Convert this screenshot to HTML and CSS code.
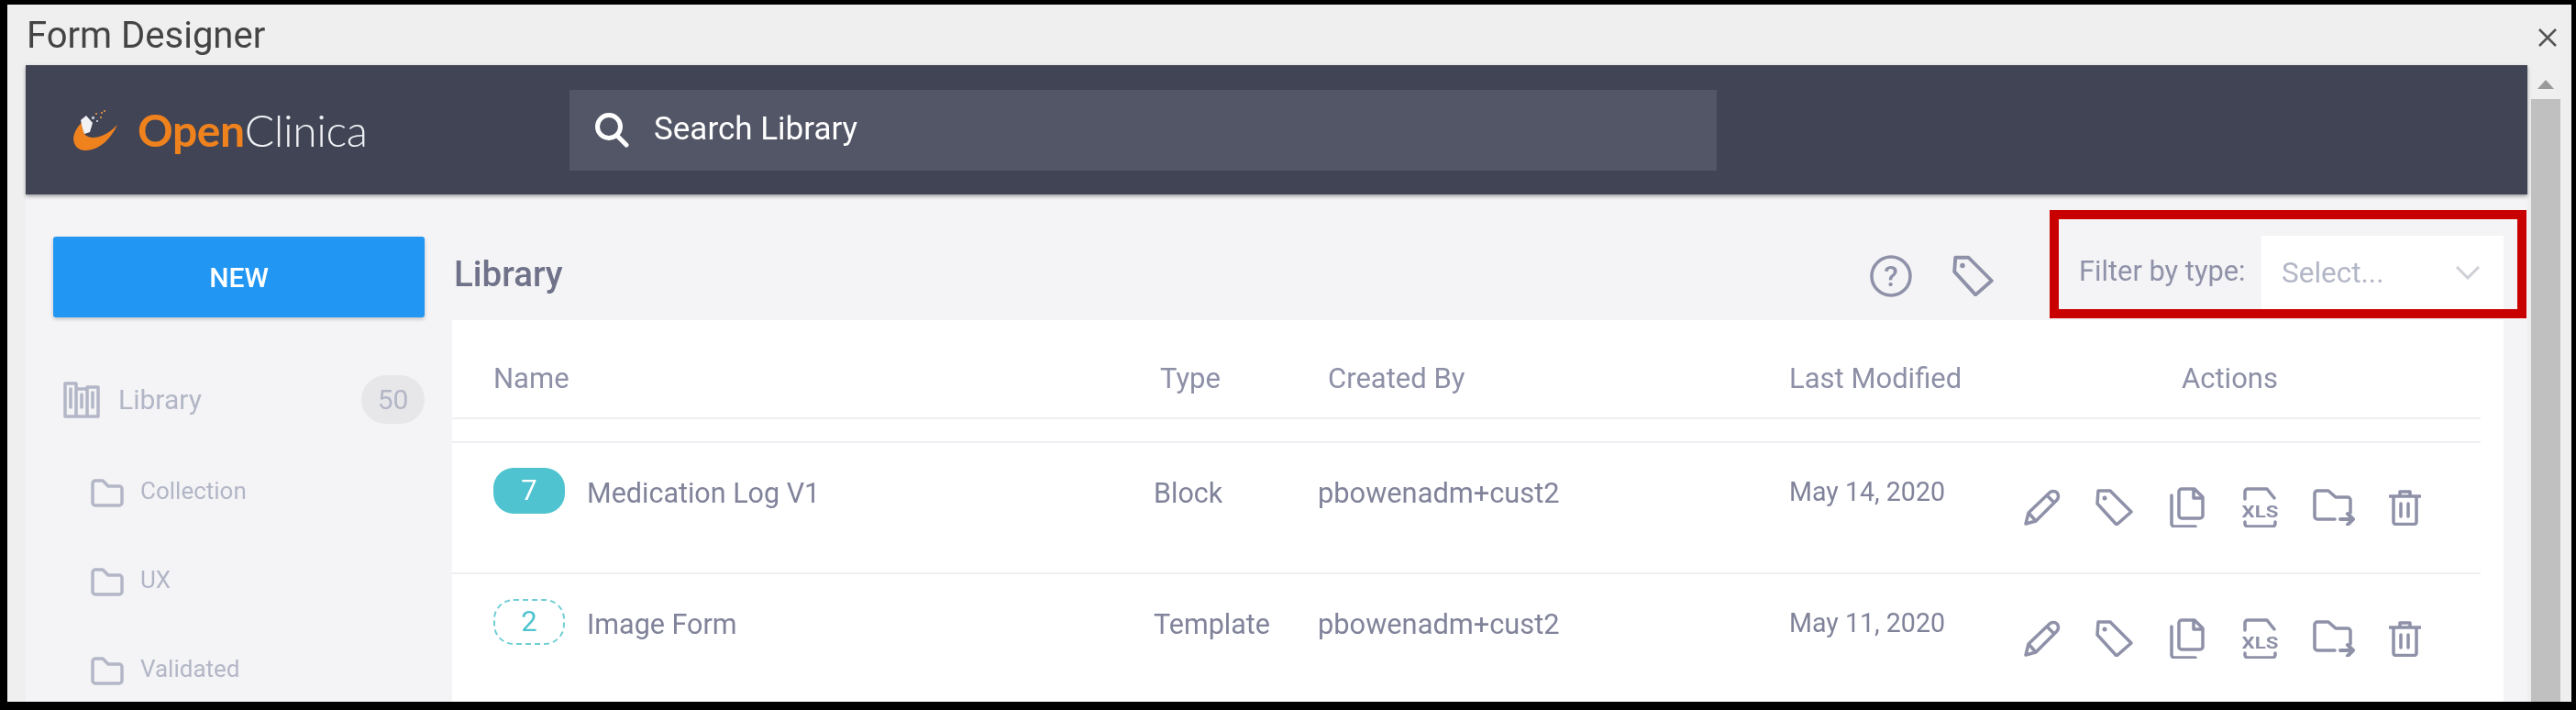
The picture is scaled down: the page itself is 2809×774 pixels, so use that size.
FILE: index.html
```html
<!DOCTYPE html>
<html lang="en">
<head>
    <meta charset="UTF-8">
    <title>Form Designer</title>
    <link rel="stylesheet" href="styles.css">
</head>
<body>
    <svg class="defs" width="0" height="0">
        <symbol id="i-pencil" viewBox="0 0 40 40"><path d="M2 38l3-12L28 4c2-2 6-2 8 0s2 6 0 8L13 35z M25 7l8 8 M5 26l8 9"/></symbol>
        <symbol id="i-tag" viewBox="0 0 41 40"><path d="M3 2h13l23 23-16 14L2 16z"/><circle class="dot" cx="10" cy="10" r="2.5"/></symbol>
        <symbol id="i-copy" viewBox="0 0 38 44"><path d="M13 2h14l9 9v20a3 3 0 0 1-3 3H13a3 3 0 0 1-3-3V5a3 3 0 0 1 3-3z M26 2v10h10 M2 9v31a3 3 0 0 0 3 3h23"/></symbol>
        <symbol id="i-move" viewBox="0 0 47 40"><path d="M24 33H5a3 3 0 0 1-3-3V5a3 3 0 0 1 3-3h12l8 7h13a3 3 0 0 1 3 3v14"/><path class="thick" d="M30 33h14 M38 27l6 6-6 6"/></symbol>
        <symbol id="i-trash" viewBox="0 0 35 39"><path d="M1 7h33 M12 6V2h11v4 M5 8v27a2.5 2.5 0 0 0 2.500 2.500h20a2.500 2.500 0 0 0 2.500-2.500V8 M13 15v14 M21 15v14"/></symbol>
        <symbol id="i-folder" viewBox="0 0 36 31"><path d="M2 5a3 3 0 0 1 3-3h8l6 6h12a3 3 0 0 1 3 3v15a3 3 0 0 1-3 3H5a3 3 0 0 1-3-3z"/></symbol>
    </svg>

    <div class="window">
        <div class="titleBar">
            <span class="titleText">Form Designer</span>
            <svg class="closeIcon" viewBox="0 0 22 22"><path d="M2 2l18 18 M20 2L2 20"/></svg>
        </div>

        <div class="windowBody">
            <div class="app">
                <header class="appHeader">
                    <div class="logo">
                        <svg class="logoMark" viewBox="0 0 48 45">
                            <path fill="#f0821e" d="M48 17C42 30 30 45 13 45 3 45-2 36 1 27c2-6 6-11 11-15-1 5-2 11 0 15 4 6 20 7 36-10z"/>
                            <path fill="#f2f2f4" d="M8 12l6-5 7 8-3 10-6 2c-2-5-3-10-4-15z"/>
                            <path fill="#b9bcc9" d="M20 8h3v3h-3z M25 12h2v2h-2z"/>
                            <path fill="#c98a4a" d="M24 4h2v2h-2z M30 3h2v2h-2z M33 1h2v2h-2z M29 8h2v2h-2z"/>
                        </svg>
                        <span class="logoText"><b>Open</b>Clinica</span>
                    </div>
                    <div class="searchBox">
                        <svg class="searchIcon" viewBox="0 0 38 39"><circle cx="16" cy="16" r="12.500"/><path d="M25 26l10 10"/></svg>
                        <span>Search Library</span>
                    </div>
                </header>

                <div class="appBody">
                    <aside class="sidebar">
                        <button class="newBtn">NEW</button>
                        <div class="libraryItem">
                            <svg class="libraryIcon" viewBox="0 0 40 41"><path d="M2 3h12v36H2z M14 9h12v30H14z M26 7h12v32H26z M8 9v20 M20 15v14 M32 13v16"/></svg>
                            <span class="libraryName">Library</span>
                            <span class="countBadge">50</span>
                        </div>
                        <div class="folderItem"><svg class="folderIcon"><use href="#i-folder"/></svg><span>Collection</span></div>
                        <div class="folderItem"><svg class="folderIcon"><use href="#i-folder"/></svg><span>UX</span></div>
                        <div class="folderItem"><svg class="folderIcon"><use href="#i-folder"/></svg><span>Validated</span></div>
                    </aside>

                    <main class="main">
                        <div class="toolbar">
                            <h2 class="pageTitle">Library</h2>
                            <svg class="toolIcon helpIcon" viewBox="0 0 46 46"><circle cx="23" cy="23" r="21"/><text x="23" y="34" text-anchor="middle">?</text></svg>
                            <svg class="toolIcon tagTool"><use href="#i-tag"/></svg>
                            <div class="filterBox">
                                <span class="filterLabel">Filter by type:</span>
                                <div class="selectBox">
                                    <span>Select...</span>
                                    <svg class="chevron" viewBox="0 0 26 15"><path d="M1 1l12 12L25 1"/></svg>
                                </div>
                            </div>
                        </div>

                        <div class="panel">
                            <div class="gridRow headRow">
                                <span>Name</span>
                                <span class="headType">Type</span>
                                <span class="headCreated">Created By</span>
                                <span>Last Modified</span>
                                <span class="headActions">Actions</span>
                            </div>
                            <div class="gridRow dataRow">
                                <div class="nameCell"><span class="numBadge">7</span>Medication Log V1</div>
                                <span>Block</span>
                                <span class="userCell">pbowenadm+cust2</span>
                                <span class="dateCell">May 14, 2020</span>
                                <div class="actions">
                                    <svg class="aPencil"><use href="#i-pencil"/></svg>
                                    <svg class="aTag"><use href="#i-tag"/></svg>
                                    <svg class="aCopy"><use href="#i-copy"/></svg>
                                    <svg class="aXls" viewBox="0 0 41 44">
                                        <path d="M4 13V5a3 3 0 0 1 3-3h21l8 10 M4 38v2a3 3 0 0 0 3 3h27a3 3 0 0 0 3-3v-2"/>
                                        <text x="20.500" y="33" text-anchor="middle" textLength="40" lengthAdjust="spacingAndGlyphs">XLS</text>
                                    </svg>
                                    <svg class="aMove"><use href="#i-move"/></svg>
                                    <svg class="aTrash"><use href="#i-trash"/></svg>
                                </div>
                            </div>
                            <div class="gridRow dataRow">
                                <div class="nameCell"><span class="numBadge dashed">2</span>Image Form</div>
                                <span>Template</span>
                                <span class="userCell">pbowenadm+cust2</span>
                                <span class="dateCell">May 11, 2020</span>
                                <div class="actions">
                                    <svg class="aPencil"><use href="#i-pencil"/></svg>
                                    <svg class="aTag"><use href="#i-tag"/></svg>
                                    <svg class="aCopy"><use href="#i-copy"/></svg>
                                    <svg class="aXls" viewBox="0 0 41 44">
                                        <path d="M4 13V5a3 3 0 0 1 3-3h21l8 10 M4 38v2a3 3 0 0 0 3 3h27a3 3 0 0 0 3-3v-2"/>
                                        <text x="20.500" y="33" text-anchor="middle" textLength="40" lengthAdjust="spacingAndGlyphs">XLS</text>
                                    </svg>
                                    <svg class="aMove"><use href="#i-move"/></svg>
                                    <svg class="aTrash"><use href="#i-trash"/></svg>
                                </div>
                            </div>
                        </div>
                    </main>
                </div>
            </div>

            <div class="scrollBar">
                <div class="scrollArrow"></div>
                <div class="scrollThumb"></div>
            </div>
        </div>
    </div>
</body>
</html>
```

FILE: styles.css
```css
/* variables */
:root {
    --textMain: #80839a;
    --textSoft: #b3b6c6;
    --iconColor: #8e91a8;
    --lineColor: #eeeff3;
    --pageBg: #f4f4f6;
}

* {
    box-sizing: border-box;
}

html, body {
    height: 100%;
}

body {
    margin: 0;
    padding: 5px 5px 9px 8px;
    background-color: #000;
    overflow: hidden;
    font-family: Roboto, "Liberation Sans", sans-serif;
    color: var(--textMain);
}

.defs {
    position: absolute;
}

/* shared icon strokes */
symbol path, .aXls path, .libraryIcon path, .toolIcon circle {
    fill: none;
    stroke: var(--iconColor);
    stroke-width: 3.500;
    stroke-linejoin: round;
    stroke-linecap: round;
}

symbol .thick {
    stroke-width: 4;
}

symbol .dot {
    fill: var(--iconColor);
}

.aXls text {
    font-size: 19px;
    font-weight: 700;
    fill: var(--iconColor);
}

/* window (the source picture is a soft upscale) */
.window {
    height: 100%;
    display: flex;
    flex-direction: column;
    overflow: hidden;
    background-color: #efefef;
    filter: blur(0.6px);
}

.titleBar {
    height: 66px;
    flex: none;
    display: flex;
    align-items: center;
    justify-content: space-between;
    padding: 0 15px 0 21px;
}

.titleText {
    font-size: 40px;
    color: #444;
}

.closeIcon {
    width: 22px;
    height: 22px;
    margin-top: 6px;
}

.closeIcon path {
    fill: none;
    stroke: #555;
    stroke-width: 2.500;
}

.windowBody {
    flex: 1;
    min-height: 0;
    display: flex;
    padding-left: 20px;
}

.app {
    width: 2728px;
    flex: none;
    display: flex;
    flex-direction: column;
    background-color: var(--pageBg);
}

/* top bar */
.appHeader {
    height: 141px;
    flex: none;
    display: flex;
    align-items: center;
    background-color: #414454;
    box-shadow: 0 2px 4px rgba(0, 0, 0, 0.35);
}

.logo {
    width: 593px;
    display: flex;
    align-items: center;
    gap: 22px;
    padding-left: 52px;
}

.logoMark {
    width: 48px;
    height: 45px;
}

.logoText {
    font-family: Lato, sans-serif;
    font-size: 48px;
    font-weight: 300;
    letter-spacing: -0.4px;
    color: #eef0f4;
}

.logoText b {
    font-weight: 700;
    color: #f0821e;
}

.searchBox {
    width: 1251px;
    height: 88px;
    display: flex;
    align-items: center;
    gap: 27px;
    padding-left: 27px;
    font-size: 35px;
    color: #fff;
    background-color: #535666;
}

.searchBox span {
    margin-top: -2px;
}

.searchIcon {
    width: 38px;
    height: 39px;
}

.searchIcon circle, .searchIcon path {
    fill: none;
    stroke: #fff;
    stroke-width: 5;
    stroke-linecap: round;
}

.appBody {
    flex: 1;
    min-height: 0;
    display: flex;
}

/* sidebar */
.sidebar {
    width: 465px;
    flex: none;
    padding: 46px 30px 0;
}

.newBtn {
    width: 100%;
    height: 88px;
    border: none;
    border-radius: 3px;
    font-family: inherit;
    font-size: 30px;
    font-weight: 500;
    color: #fff;
    background-color: #2196f3;
    box-shadow: 0 2px 4px rgba(0, 0, 0, 0.2);
}

.libraryItem {
    display: flex;
    align-items: center;
    gap: 20px;
    margin-top: 63px;
    padding-left: 11px;
    color: var(--textSoft);
    font-size: 30px;
}

.libraryIcon {
    width: 40px;
    height: 41px;
}

.libraryIcon path {
    stroke: #b3b6c6;
}

.libraryName {
    flex: 1;
}

.countBadge {
    width: 69px;
    height: 53px;
    display: flex;
    align-items: center;
    justify-content: center;
    border-radius: 27px;
    font-size: 30px;
    background-color: #e7e7ea;
}

.folderItem {
    display: flex;
    align-items: center;
    gap: 18px;
    height: 31px;
    margin-top: 66px;
    padding-left: 41px;
    font-size: 26px;
    color: var(--textSoft);
}

.libraryItem + .folderItem {
    margin-top: 60px;
}

.folderIcon {
    width: 36px;
    height: 31px;
    --iconColor: #b3b6c6;
}

.folderItem span {
    margin-top: -6px;
}

/* main column */
.main {
    flex: 1;
    min-width: 0;
    padding-right: 26px;
}

.toolbar {
    height: 137px;
    display: flex;
    align-items: flex-start;
    padding-top: 17px;
}

.pageTitle {
    margin: 0 auto 0 2px;
    padding-top: 47px;
    font-size: 38.500px;
    font-weight: 500;
    color: #6f7288;
}

.toolIcon {
    margin-top: 49px;
    flex: none;
}

.helpIcon {
    width: 46px;
    height: 46px;
    margin-right: 44px;
}

.helpIcon text {
    font-size: 32px;
    font-weight: 500;
    fill: var(--iconColor);
}

.tagTool {
    width: 45px;
    height: 45px;
    margin-right: 61px;
}

/* red annotation box around the filter */
.filterBox {
    width: 520px;
    height: 118px;
    flex: none;
    display: flex;
    align-items: stretch;
    margin-right: -25px;
    padding: 18px 15px 0 22px;
    border: 10px solid #c80000;
}

.filterLabel {
    width: 199px;
    flex: none;
    padding-top: 20px;
    font-size: 30.800px;
    color: #8f92a8;
}

.selectBox {
    flex: 1;
    display: flex;
    align-items: center;
    justify-content: space-between;
    padding: 0 26px 0 22px;
    font-size: 31.500px;
    color: var(--textSoft);
    background-color: #fff;
}

.chevron {
    width: 26px;
    height: 15px;
}

.chevron path {
    fill: none;
    stroke: #cfd0d6;
    stroke-width: 3;
}

/* table */
.panel {
    background-color: #fff;
    height: 418px;
    overflow: hidden;
}

.gridRow {
    display: grid;
    grid-template-columns: 720px 179px 514px 256px 1fr;
    width: 2212px;
    padding-left: 45px;
    font-size: 30.500px;
}

.headRow {
    height: 108px;
    align-items: center;
    padding-top: 20px;
    font-size: 31px;
    color: #8d90a6;
    border-bottom: 2px solid var(--lineColor);
    margin-bottom: 24px;
}

.headType {
    padding-left: 7px;
}

.headCreated {
    padding-left: 11px;
}

.headActions {
    padding-left: 172px;
}

.dataRow {
    height: 143px;
    align-items: start;
    padding-top: 30px;
    border-top: 2px solid var(--lineColor);
    line-height: 50px;
}

.userCell {
    font-size: 30.800px;
}

.nameCell {
    display: flex;
    align-items: center;
    gap: 24px;
}

.numBadge {
    width: 78px;
    height: 50px;
    display: flex;
    align-items: center;
    justify-content: center;
    margin: -3px 0 3px;
    border-radius: 22px;
    font-size: 31px;
    color: #fff;
    background-color: #4fc3cf;
}

.numBadge.dashed {
    color: #4fc3cf;
    background-color: transparent;
    border: 2px dashed #6fcdd6;
}

.dateCell {
    font-size: 28.600px;
    margin-top: -2px;
}

.actions {
    display: flex;
    align-items: center;
    height: 40px;
    margin-top: 20px;
}

.actions svg {
    flex: none;
}

.aPencil { width: 40px; height: 40px; margin-right: 38px; }
.aTag { width: 41px; height: 40px; margin-right: 40px; }
.aCopy { width: 38px; height: 44px; margin-right: 40px; }
.aXls { width: 41px; height: 44px; margin-right: 37px; }
.aMove { width: 47px; height: 40px; margin-right: 36px; }
.aTrash { width: 35px; height: 39px; }

/* scrollbar */
.scrollBar {
    flex: 1;
    display: flex;
    flex-direction: column;
    align-items: center;
    padding: 16px 12px 0 4px;
}

.scrollArrow {
    width: 0;
    height: 0;
    border-left: 9px solid transparent;
    border-right: 9px solid transparent;
    border-bottom: 10px solid #9a9a9a;
}

.scrollThumb {
    flex: 1;
    width: 100%;
    margin-top: 11px;
    background-color: #c0c0c0;
}
```
